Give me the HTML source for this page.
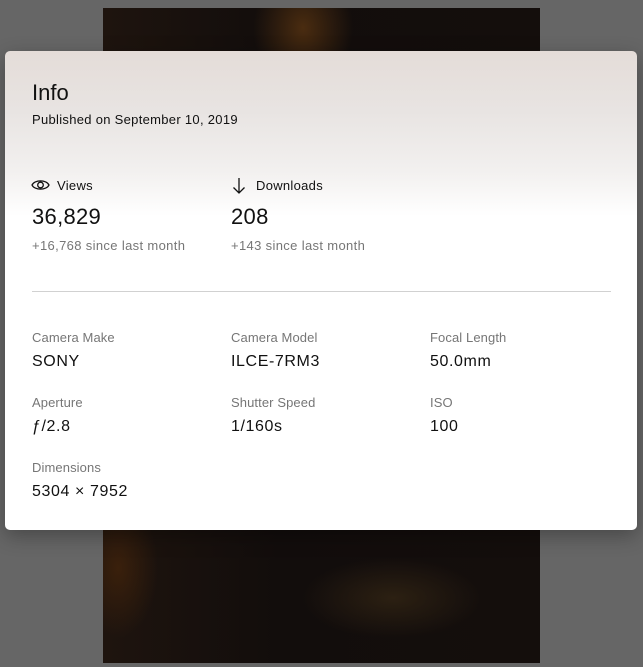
<!DOCTYPE html>
<html><head><meta charset="utf-8"><style>
html,body{margin:0;padding:0;}
body{width:643px;height:667px;background:#666;position:relative;overflow:hidden;font-family:"Liberation Sans",sans-serif;color:#111;}
.photo{position:absolute;left:103px;top:8px;width:437px;height:655px;background:
radial-gradient(ellipse 50px 60px at 200px 20px,#4a2c10,transparent),
radial-gradient(ellipse 40px 70px at 15px 560px,#3a200c,transparent),
radial-gradient(ellipse 90px 40px at 290px 590px,#2c2012,transparent),
linear-gradient(90deg,#1e140e,#120d0c 40%,#140e0c);}
.panel{position:absolute;left:5px;top:51px;width:632px;height:479px;border-radius:5px;
background:linear-gradient(#e4dcd8 0px,#e8e4e2 60px,#f2f0ef 120px,#fff 165px);box-shadow:0 6px 20px rgba(0,0,0,.3);}
.t{position:absolute;white-space:nowrap;}
.h1{font-size:22px;left:27px;top:29px;}
.pub{font-size:13px;left:27px;top:61px;letter-spacing:0.3px;}
.lab{font-size:13px;color:#111;letter-spacing:0.3px;}
.big{font-size:22px;letter-spacing:0.3px;}
.sm{font-size:13px;color:#767676;letter-spacing:0.35px;}
.hr{position:absolute;left:27px;top:240px;width:579px;height:1px;background:#d1d1d1;}
.k{font-size:13px;color:#767676;letter-spacing:0.1px;}
.v{font-size:16px;color:#111;letter-spacing:0.6px;}
</style></head><body>
<div class="photo"></div>
<div class="panel">
<div class="t h1">Info</div>
<div class="t pub">Published on September 10, 2019</div>
<svg class="t" style="left:26px;top:126px" width="19" height="16" viewBox="0 0 19 16"><path d="M1 8C3.5 2.5 15.5 2.5 18 8C15.5 13.5 3.5 13.5 1 8Z" fill="none" stroke="#111" stroke-width="1.3"/><circle cx="9.5" cy="8" r="2.8" fill="none" stroke="#111" stroke-width="1.3"/></svg>
<div class="t lab" style="left:52px;top:127px">Views</div>
<div class="t big" style="left:27px;top:153px">36,829</div>
<div class="t sm" style="left:27px;top:187px">+16,768 since last month</div>
<svg class="t" style="left:227px;top:126px" width="14" height="18" viewBox="0 0 14 18"><path d="M7 1V16M1.5 10.5L7 16L12.5 10.5" fill="none" stroke="#111" stroke-width="1.3"/></svg>
<div class="t lab" style="left:251px;top:127px">Downloads</div>
<div class="t big" style="left:226px;top:153px">208</div>
<div class="t sm" style="left:226px;top:187px">+143 since last month</div>
<div class="hr"></div>
<div class="t k" style="left:27px;top:279px">Camera Make</div>
<div class="t v" style="left:27px;top:302px">SONY</div>
<div class="t k" style="left:226px;top:279px">Camera Model</div>
<div class="t v" style="left:226px;top:302px">ILCE-7RM3</div>
<div class="t k" style="left:425px;top:279px">Focal Length</div>
<div class="t v" style="left:425px;top:302px">50.0mm</div>
<div class="t k" style="left:27px;top:344px">Aperture</div>
<div class="t v" style="left:27px;top:367px">ƒ/2.8</div>
<div class="t k" style="left:226px;top:344px">Shutter Speed</div>
<div class="t v" style="left:226px;top:367px">1/160s</div>
<div class="t k" style="left:425px;top:344px">ISO</div>
<div class="t v" style="left:425px;top:367px">100</div>
<div class="t k" style="left:27px;top:409px">Dimensions</div>
<div class="t v" style="left:27px;top:432px">5304 × 7952</div>
</div>
</body></html>
